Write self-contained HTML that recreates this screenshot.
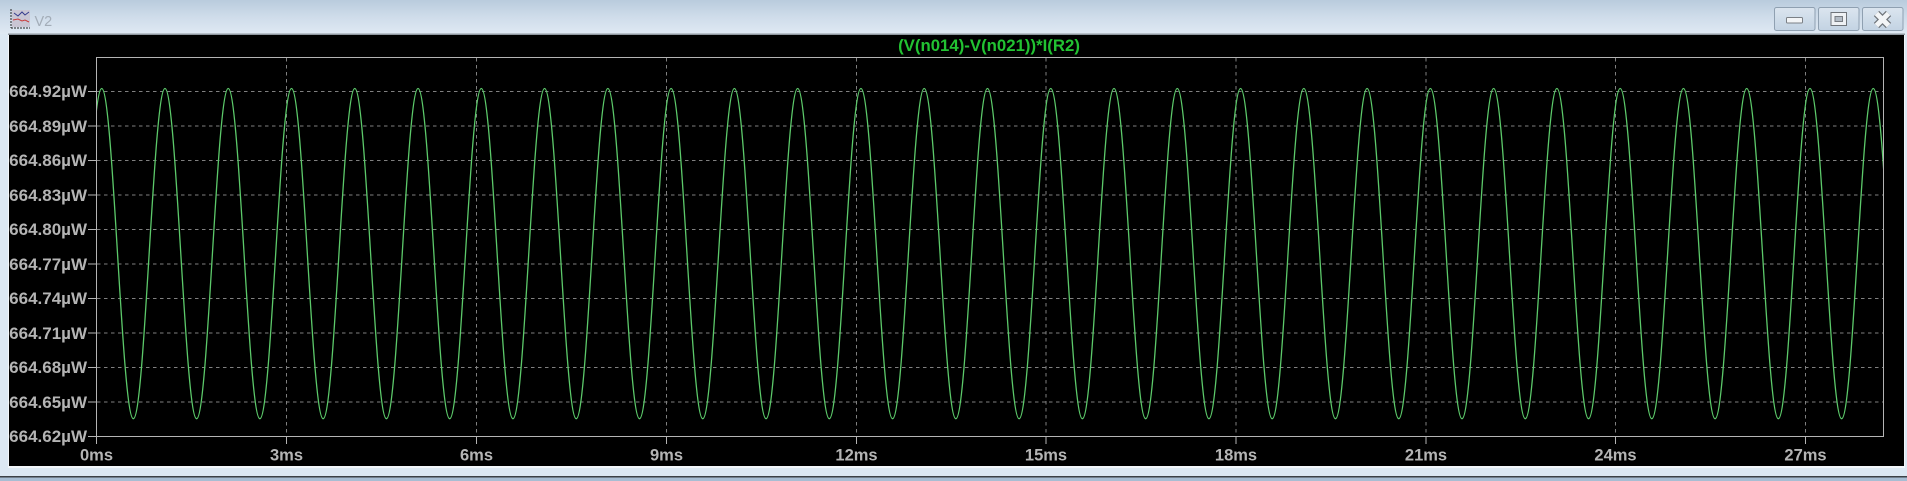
<!DOCTYPE html>
<html><head><meta charset="utf-8"><style>
html,body{margin:0;padding:0;background:#dce8f3}
svg{display:block}
text{font-family:"Liberation Sans",sans-serif;font-weight:bold}
</style></head><body>
<svg xmlns="http://www.w3.org/2000/svg" width="1907" height="481" viewBox="0 0 1907 481">
<defs>
<linearGradient id="tb" x1="0" y1="0" x2="0" y2="1"><stop offset="0" stop-color="#b9cbdd"/><stop offset=".5" stop-color="#cfdcea"/><stop offset="1" stop-color="#dfe9f3"/></linearGradient>
<linearGradient id="bt" x1="0" y1="0" x2="0" y2="1"><stop offset="0" stop-color="#dbe5ef"/><stop offset="1" stop-color="#c3d3e3"/></linearGradient>
<clipPath id="pl"><rect x="97" y="58" width="1786" height="378"/></clipPath>
</defs>
<rect width="1907" height="481" fill="#dce8f3"/>
<rect width="1907" height="34" fill="url(#tb)"/>
<rect x="8" y="33.500" width="1897" height="1.500" fill="#8f979f"/>
<rect x="8" y="35" width="1" height="432" fill="#f2f6fa"/>
<rect x="1904" y="35" width="1" height="432" fill="#f2f6fa"/>
<rect x="8" y="466" width="1897" height="2" fill="#f2f6fa"/>
<rect x="9" y="35" width="1895" height="431" fill="#000"/>
<rect x="0" y="476" width="1907" height="1.500" fill="#3c4146"/>
<rect x="0" y="477.500" width="1907" height="3.500" fill="#a7bdd3"/>
<!-- icon -->
<rect x="12" y="10" width="18" height="17" fill="#c9c6d4"/>
<path d="M11 9V28M11 28H30" stroke="#222" fill="none" stroke-width="1" stroke-dasharray="2 1"/>
<path d="M14 13l4 3 4-4 3 3 4-3" stroke="#343a8c" fill="none"/>
<path d="M13 20l5-1 4 2 3-1 4 2" stroke="#c83c3c" fill="none"/>
<text x="34.500" y="26" font-size="14.500" fill="#a3adb8" style="font-weight:normal">V2</text>
<!-- window buttons -->
<g stroke="#8fa0b1" fill="url(#bt)"><rect x="1774.500" y="7.500" width="40.500" height="23" rx="2"/><rect x="1818.500" y="7.500" width="40.500" height="23" rx="2"/><rect x="1862.500" y="7.500" width="40.500" height="23" rx="2"/></g>
<rect x="1786.500" y="17.500" width="16" height="5.500" rx="1" fill="#f3f5f7" stroke="#7b8086"/>
<rect x="1831" y="12.500" width="15.500" height="13" fill="#eef1f4" stroke="#6f747a"/>
<rect x="1835" y="16.500" width="7.500" height="5" fill="#b3bcc6" stroke="#777c82"/>
<path d="M1876.500 13.500l12 12M1888.500 13.500l-12 12" stroke="#6f747a" stroke-width="7.500" fill="none"/>
<path d="M1876.500 13.500l12 12M1888.500 13.500l-12 12" stroke="#f3f5f7" stroke-width="5" fill="none"/>
<!-- grid -->
<g stroke="#808080" stroke-width="1" stroke-dasharray="3.500 3.500" fill="none">
<path d="M97 91.500H1883M97 126H1883M97 160.500H1883M97 195H1883M97 229.500H1883M97 264H1883M97 298.500H1883M97 333H1883M97 367.500H1883M97 402H1883"/>
<path d="M286.500 58V436M476.500 58V436M666.500 58V436M856.500 58V436M1046 58V436M1236 58V436M1426 58V436M1615.500 58V436M1805.500 58V436"/>
</g>
<!-- frame and ticks -->
<g stroke="#b4b4b4" stroke-width="1" fill="none">
<rect x="96.500" y="57.500" width="1787" height="379"/>
<path d="M88 91.500H96M88 126H96M88 160.500H96M88 195H96M88 229.500H96M88 264H96M88 298.500H96M88 333H96M88 367.500H96M88 402H96M88 436.500H96"/>
<path d="M96.500 437V444M286.500 437V444M476.500 437V444M666.500 437V444M856.500 437V444M1046 437V444M1236 437V444M1426 437V444M1615.500 437V444M1805.500 437V444"/>
</g>
<!-- trace -->
<path clip-path="url(#pl)" fill="none" stroke="#5cc96a" stroke-width="1.300" d="M38.430 88.500c11.520 0 20.115 330.200 31.635 330.200s20.115-330.200 31.635-330.200s20.115 330.200 31.635 330.200s20.115-330.200 31.635-330.200s20.115 330.200 31.635 330.200s20.115-330.200 31.635-330.200s20.115 330.200 31.635 330.200s20.115-330.200 31.635-330.200s20.115 330.200 31.635 330.200s20.115-330.200 31.635-330.200s20.115 330.200 31.635 330.200s20.115-330.200 31.635-330.200s20.115 330.200 31.635 330.200s20.115-330.200 31.635-330.200s20.115 330.200 31.635 330.200s20.115-330.200 31.635-330.200s20.115 330.200 31.635 330.200s20.115-330.200 31.635-330.200s20.115 330.200 31.635 330.200s20.115-330.200 31.635-330.200s20.115 330.200 31.635 330.200s20.115-330.200 31.635-330.200s20.115 330.200 31.635 330.200s20.115-330.200 31.635-330.200s20.115 330.200 31.635 330.200s20.115-330.200 31.635-330.200s20.115 330.200 31.635 330.200s20.115-330.200 31.635-330.200s20.115 330.200 31.635 330.200s20.115-330.200 31.635-330.200s20.115 330.200 31.635 330.200s20.115-330.200 31.635-330.200s20.115 330.200 31.635 330.200s20.115-330.200 31.635-330.200s20.115 330.200 31.635 330.200s20.115-330.200 31.635-330.200s20.115 330.200 31.635 330.200s20.115-330.200 31.635-330.200s20.115 330.200 31.635 330.200s20.115-330.200 31.635-330.200s20.115 330.200 31.635 330.200s20.115-330.200 31.635-330.200s20.115 330.200 31.635 330.200s20.115-330.200 31.635-330.200s20.115 330.200 31.635 330.200s20.115-330.200 31.635-330.200s20.115 330.200 31.635 330.200s20.115-330.200 31.635-330.200s20.115 330.200 31.635 330.200s20.115-330.200 31.635-330.200s20.115 330.200 31.635 330.200s20.115-330.200 31.635-330.200s20.115 330.200 31.635 330.200s20.115-330.200 31.635-330.200s20.115 330.200 31.635 330.200s20.115-330.200 31.635-330.200s20.115 330.200 31.635 330.200s20.115-330.200 31.635-330.200s20.115 330.200 31.635 330.200s20.115-330.200 31.635-330.200s20.115 330.200 31.635 330.200s20.115-330.200 31.635-330.200s20.115 330.200 31.635 330.200s20.115-330.200 31.635-330.200s20.115 330.200 31.635 330.200s20.115-330.200 31.635-330.200"/>
<!-- title -->
<text x="989" y="51" font-size="16.800" fill="#22c232" text-anchor="middle">(V(n014)-V(n021))*I(R2)</text>
<!-- y labels -->
<g font-size="17" fill="#b4b4b4" text-anchor="end">
<text x="87" y="97">664.92µW</text>
<text x="87" y="132">664.89µW</text>
<text x="87" y="166">664.86µW</text>
<text x="87" y="201">664.83µW</text>
<text x="87" y="235">664.80µW</text>
<text x="87" y="270">664.77µW</text>
<text x="87" y="304">664.74µW</text>
<text x="87" y="339">664.71µW</text>
<text x="87" y="373">664.68µW</text>
<text x="87" y="408">664.65µW</text>
<text x="87" y="442">664.62µW</text>
</g>
<!-- x labels -->
<g font-size="16.500" fill="#b4b4b4" text-anchor="middle">
<text x="96.500" y="460.500">0ms</text>
<text x="286.500" y="460.500">3ms</text>
<text x="476.500" y="460.500">6ms</text>
<text x="666.500" y="460.500">9ms</text>
<text x="856.500" y="460.500">12ms</text>
<text x="1046" y="460.500">15ms</text>
<text x="1236" y="460.500">18ms</text>
<text x="1426" y="460.500">21ms</text>
<text x="1615.500" y="460.500">24ms</text>
<text x="1805.500" y="460.500">27ms</text>
</g>
</svg>
</body></html>
